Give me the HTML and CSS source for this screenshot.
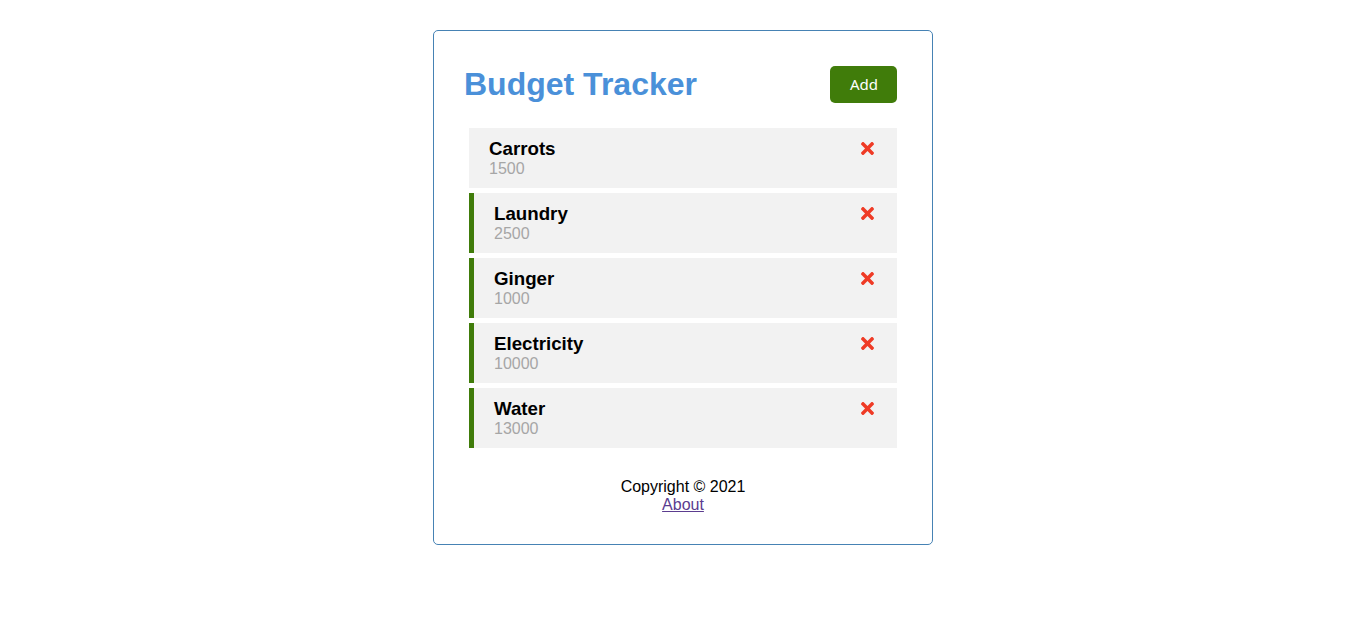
FILE: index.html
```html
<!DOCTYPE html>
<html lang="en">
<head>
<meta charset="utf-8">
<title>Budget Tracker</title>
<link rel="stylesheet" href="styles.css">
</head>
<body>
<div class="container">
  <header class="header">
    <h1 class="title">Budget Tracker</h1>
    <button class="btn">Add</button>
  </header>
  <div class="tasks">
    <div class="task">
      <h3>Carrots <svg class="del" viewBox="0 0 352 512"><path d="M242.72 256l100.07-100.07c12.28-12.28 12.28-32.19 0-44.48l-22.24-22.24c-12.28-12.28-32.19-12.28-44.48 0L176 189.28 75.93 89.21c-12.28-12.28-32.19-12.28-44.48 0L9.21 111.45c-12.28 12.28-12.28 32.19 0 44.48L109.28 256 9.21 356.07c-12.28 12.28-12.28 32.19 0 44.48l22.24 22.24c12.28 12.28 32.2 12.28 44.48 0L176 322.72l100.07 100.07c12.28 12.28 32.2 12.28 44.48 0l22.24-22.24c12.28-12.28 12.28-32.19 0-44.48L242.72 256z"/></svg></h3>
      <p>1500</p>
    </div>
    <div class="task reminder">
      <h3>Laundry <svg class="del" viewBox="0 0 352 512"><path d="M242.72 256l100.07-100.07c12.28-12.28 12.28-32.19 0-44.48l-22.24-22.24c-12.28-12.28-32.19-12.28-44.48 0L176 189.28 75.93 89.21c-12.28-12.28-32.19-12.28-44.48 0L9.21 111.45c-12.28 12.28-12.28 32.19 0 44.48L109.28 256 9.21 356.07c-12.28 12.28-12.28 32.19 0 44.48l22.24 22.24c12.28 12.28 32.2 12.28 44.48 0L176 322.72l100.07 100.07c12.28 12.28 32.2 12.28 44.48 0l22.24-22.24c12.28-12.28 12.28-32.19 0-44.48L242.72 256z"/></svg></h3>
      <p>2500</p>
    </div>
    <div class="task reminder">
      <h3>Ginger <svg class="del" viewBox="0 0 352 512"><path d="M242.72 256l100.07-100.07c12.28-12.28 12.28-32.19 0-44.48l-22.24-22.24c-12.28-12.28-32.19-12.28-44.48 0L176 189.28 75.93 89.21c-12.28-12.28-32.19-12.28-44.48 0L9.21 111.45c-12.28 12.28-12.28 32.19 0 44.48L109.28 256 9.21 356.07c-12.28 12.28-12.28 32.19 0 44.48l22.24 22.24c12.28 12.28 32.2 12.28 44.48 0L176 322.72l100.07 100.07c12.28 12.28 32.2 12.28 44.48 0l22.24-22.24c12.28-12.28 12.28-32.19 0-44.48L242.72 256z"/></svg></h3>
      <p>1000</p>
    </div>
    <div class="task reminder">
      <h3>Electricity <svg class="del" viewBox="0 0 352 512"><path d="M242.72 256l100.07-100.07c12.28-12.28 12.28-32.19 0-44.48l-22.24-22.24c-12.28-12.28-32.19-12.28-44.48 0L176 189.28 75.93 89.21c-12.28-12.28-32.19-12.28-44.48 0L9.21 111.45c-12.28 12.28-12.28 32.19 0 44.48L109.28 256 9.21 356.07c-12.28 12.28-12.28 32.19 0 44.48l22.24 22.24c12.28 12.28 32.2 12.28 44.48 0L176 322.72l100.07 100.07c12.28 12.28 32.2 12.28 44.48 0l22.24-22.24c12.28-12.28 12.28-32.19 0-44.48L242.72 256z"/></svg></h3>
      <p>10000</p>
    </div>
    <div class="task reminder">
      <h3>Water <svg class="del" viewBox="0 0 352 512"><path d="M242.72 256l100.07-100.07c12.28-12.28 12.28-32.19 0-44.48l-22.24-22.24c-12.28-12.28-32.19-12.28-44.48 0L176 189.28 75.93 89.21c-12.28-12.28-32.19-12.28-44.48 0L9.21 111.45c-12.28 12.28-12.28 32.19 0 44.48L109.28 256 9.21 356.07c-12.28 12.28-12.28 32.19 0 44.48l22.24 22.24c12.28 12.28 32.2 12.28 44.48 0L176 322.72l100.07 100.07c12.28 12.28 32.2 12.28 44.48 0l22.24-22.24c12.28-12.28 12.28-32.19 0-44.48L242.72 256z"/></svg></h3>
      <p>13000</p>
    </div>
  </div>
  <footer class="footer">
    <p>Copyright &copy; 2021</p>
    <a href="#about">About</a>
  </footer>
</div>
</body>
</html>
```

FILE: styles.css
```css
* {
  box-sizing: border-box;
  margin: 0;
  padding: 0;
}

body {
  font-family: "Liberation Sans", Arial, sans-serif;
  background: #fff;
}

.container {
  width: 500px;
  margin: 30px auto;
  min-height: 300px;
  border: 1px solid #4682b4;
  padding: 30px;
  border-radius: 5px;
}

.header {
  display: flex;
  justify-content: space-between;
  align-items: center;
  margin-bottom: 20px;
}

.title {
  font-size: 32px;
  font-weight: bold;
  color: #4a90d9;
}

.btn {
  display: inline-block;
  background: #407c0a;
  color: #fff;
  border: none;
  padding: 10px 20px;
  margin: 5px;
  border-radius: 5px;
  font-size: 15px;
  font-family: "Noto Sans", sans-serif;
  line-height: 17px;
  width: 67px;
  text-align: center;
  cursor: pointer;
}

.task {
  background: #f2f2f2;
  margin: 5px;
  padding: 10px 20px;
}

.task.reminder {
  border-left: 5px solid #407c0a;
}

.task h3 {
  display: flex;
  align-items: center;
  justify-content: space-between;
  font-size: 18.72px;
  font-weight: bold;
  color: #000;
}

.task p {
  color: #a6a6a6;
  font-size: 16px;
}

.del {
  width: 13px;
  height: 19px;
  fill: #ef3b26;
  margin-right: 3px;
  margin-bottom: 2px;
}

.footer {
  margin-top: 30px;
  text-align: center;
  font-size: 16px;
}

.footer a {
  color: #5b3c8f;
}
```
